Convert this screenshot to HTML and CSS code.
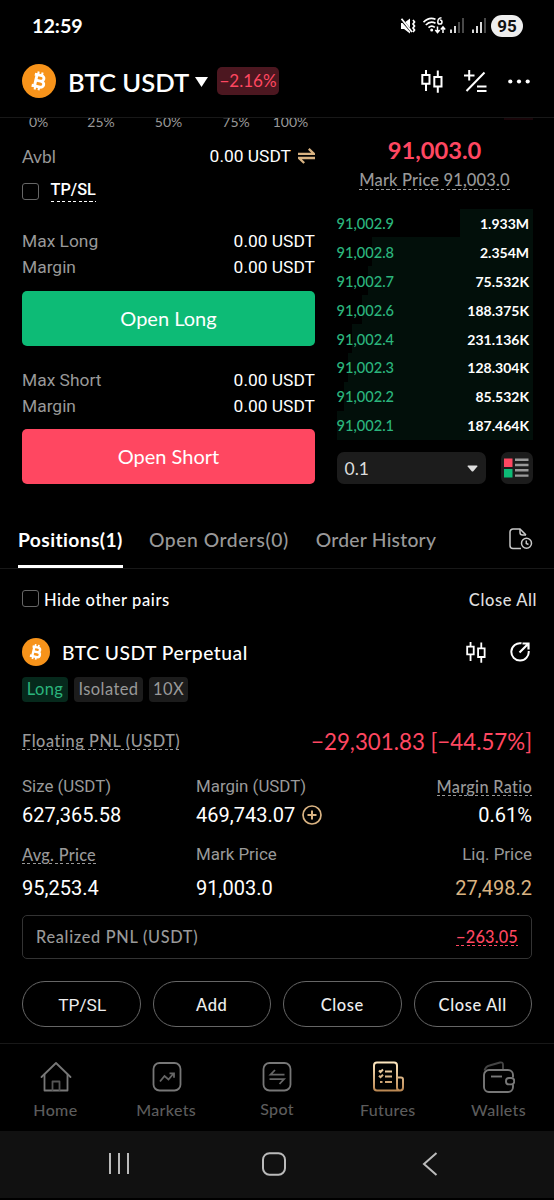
FILE: index.html
```html
<!DOCTYPE html>
<html lang="en">
<head>
<meta charset="utf-8">
<title>BTC USDT Futures</title>
<link rel="stylesheet" href="styles.css">
</head>
<body>
<svg class="defs" width="0" height="0" aria-hidden="true">
  <symbol id="btc" viewBox="0 0 34 34">
    <circle cx="17" cy="17" r="17" fill="#f7931a"/>
    <g fill="none" stroke="#fff" stroke-width="2.9" stroke-linejoin="round" transform="rotate(13 17 17)">
      <path d="M11.400 11.200H18.500a2.800 2.800 0 0 1 0 5.600H13.700M18.500 16.800h.9a3 3 0 0 1 0 6H10.800"/>
      <path d="M13.700 11.200v11.600"/>
      <path stroke-width="2.1" d="M14.600 7.800v3.200M18.600 7.800v3.200M14.600 22.800V26.200M18.600 22.800V26.200"/>
    </g>
  </symbol>
  <symbol id="candles" viewBox="0 0 22 24">
    <path d="M5 1v5M5 14.500v7.500M1.300 6h7.200v8.700H1.300zM16.800 1.500v6.500M16.800 17.500v6.300M13.300 8h7.200v9.500h-7.200z" fill="none" stroke="#fff" stroke-width="2"/>
  </symbol>
</svg>

<header class="status">
  <span class="clock">12:59</span>
  <div class="status-icons">
    <svg class="mute" width="17" height="16" viewBox="0 0 17 16"><path d="M1 5h3l6-4.500v15L4 11H1z" fill="#fff"/><path d="M.5.500 12 14" stroke="#000" stroke-width="2.6"/><path d="M1.500.800 12 14" stroke="#fff" stroke-width="1.800"/><path d="m13 2 1.500 2L13 6l1.500 2L13 10l1.500 2L13 14" fill="none" stroke="#fff" stroke-width="1.700"/></svg>
    <svg class="wifi" width="23" height="17" viewBox="0 0 23 17"><g fill="none" stroke="#fff" stroke-width="1.700"><path d="M.5 5.200Q6-.5 12.500 2.200M2.800 8q4.500-4.500 9.700-1.700M5.500 10.700q3.200-3 6.300-.3"/><path d="M18.500.8C16 1 14.800 2.800 14.800 5a2.100 2.100 0 1 0 2.100-2.100" stroke-width="1.500"/><path d="M14.500 9.500v6M12.300 13l2.200 2.500 2.200-2.500M20 16v-6M17.800 12.500 20 10l2.200 2.500" stroke-width="1.500"/></g><circle cx="8.700" cy="13" r="1.500" fill="#fff"/></svg>
    <svg class="signal" width="14" height="15" viewBox="0 0 14 15"><path d="M1 11.500V15M5 8v7" stroke="#fff" stroke-width="1.700"/><path d="M9 4v11M13 0v15" stroke="#555" stroke-width="1.700"/></svg>
    <svg class="signal second" width="14" height="15" viewBox="0 0 14 15"><path d="M1 11.500V15M5 8v7M9 4v11" stroke="#fff" stroke-width="1.700"/><path d="M13 0v15" stroke="#555" stroke-width="1.700"/></svg>
    <span class="battery">95</span>
  </div>
</header>

<section class="pair-bar">
  <svg width="34" height="34"><use href="#btc"/></svg>
  <h1 class="pair-name">BTC USDT</h1>
  <svg class="caret" width="13" height="10" viewBox="0 0 13 10"><path d="M0 0h13L6.500 10z" fill="#fff"/></svg>
  <span class="change">−2.16%</span>
  <div class="pair-tools">
    <svg width="22" height="24"><use href="#candles"/></svg>
    <svg width="23" height="23" viewBox="0 0 23 23"><path d="M0 5.500h10.500M5.200 0v10.500M2.500 21 20.500 2.500M13 16.500h9.500M13 21h9.500" fill="none" stroke="#fff" stroke-width="2"/></svg>
    <svg width="22" height="5" viewBox="0 0 22 5"><circle cx="2.300" cy="2.500" r="2.1" fill="#fff"/><circle cx="11" cy="2.500" r="2.1" fill="#fff"/><circle cx="19.700" cy="2.500" r="2.1" fill="#fff"/></svg>
  </div>
</section>

<main>
  <section class="trade">
    <div class="order-form">
      <div class="percents"><span class="p0">0%</span><span class="p25">25%</span><span class="p50">50%</span><span class="p75">75%</span><span class="p100">100%</span></div>
      <div class="line avbl"><span class="label px">Avbl</span><span class="val">0.00 USDT</span>
        <svg width="17" height="16" viewBox="0 0 17 16"><path d="M0 5.800h16L10.800.900M17 10H1l5.200 5" fill="none" stroke="#d9b382" stroke-width="2.3"/></svg>
      </div>
      <div class="tpsl"><span class="box"></span><span class="dashed tpsl-text">TP/SL</span></div>
      <div class="line max"><span class="label">Max Long</span><span class="val">0.00 USDT</span></div>
      <div class="line"><span class="label">Margin</span><span class="val">0.00 USDT</span></div>
      <button class="open long">Open Long</button>
      <div class="line max2"><span class="label">Max Short</span><span class="val">0.00 USDT</span></div>
      <div class="line"><span class="label">Margin</span><span class="val">0.00 USDT</span></div>
      <button class="open short">Open Short</button>
    </div>
    <div class="book">
      <div class="ask-edge"></div>
      <div class="last">91,003.0</div>
      <div class="mark"><span class="dashed">Mark Price 91,003.0</span></div>
      <div class="depth">
        <div class="bid"><i class="fill" style="width:73px"></i><b>91,002.9</b><em>1.933M</em></div>
        <div class="bid"><i class="fill" style="width:161px"></i><b>91,002.8</b><em>2.354M</em></div>
        <div class="bid"><i class="fill" style="width:165px"></i><b>91,002.7</b><em>75.532K</em></div>
        <div class="bid"><i class="fill" style="width:171px"></i><b>91,002.6</b><em>188.375K</em></div>
        <div class="bid"><i class="fill" style="width:181px"></i><b>91,002.4</b><em>231.136K</em></div>
        <div class="bid"><i class="fill" style="width:185px"></i><b>91,002.3</b><em>128.304K</em></div>
        <div class="bid"><i class="fill" style="width:189px"></i><b>91,002.2</b><em>85.532K</em></div>
        <div class="bid"><i class="fill" style="width:196px"></i><b>91,002.1</b><em>187.464K</em></div>
      </div>
      <div class="book-tools">
        <div class="step"><span>0.1</span><svg width="11" height="7" viewBox="0 0 11 7"><path d="M1 .5h9q.8.300.300 1L6.500 6q-1 1-2 0L.7 1.500Q.2.800 1 .5z" fill="#ddd"/></svg></div>
        <div class="view"><svg width="25" height="20" viewBox="0 0 25 20"><path d="M0 .5h8.500V9H0z" fill="#ff4761"/><path d="M0 11h8.500v8.500H0z" fill="#0dbb76"/><path d="M11 1.800h13.500M11 7h13.500M11 12.300h13.500M11 17.600h13.500" stroke="#999" stroke-width="2.400"/></svg></div>
      </div>
    </div>
  </section>

  <nav class="tabs">
    <span class="tab active">Positions(1)</span>
    <span class="tab t2">Open Orders(0)</span>
    <span class="tab t3">Order History</span>
    <svg width="24" height="22" viewBox="0 0 24 22"><g fill="none" stroke="#c8c8c8" stroke-width="1.500"><path d="M12 20.500H4A3 3 0 0 1 1 17.500V4A3 3 0 0 1 4 1h7l6 6"/><path d="M11 1v3.500A2.500 2.500 0 0 0 13.500 7H17"/><circle cx="17.500" cy="15.300" r="5"/><path d="M17.300 12.500v3l2.200 1"/></g></svg>
  </nav>

  <div class="filter"><span class="box"></span><span class="hide">Hide other pairs</span><span class="close-link">Close All</span></div>

  <article class="position">
    <div class="pos-head">
      <svg width="28" height="28"><use href="#btc"/></svg>
      <h2>BTC USDT Perpetual</h2>
      <svg class="pos-candles" width="20" height="22"><use href="#candles"/></svg>
      <svg width="20" height="20" viewBox="0 0 20 20"><path d="M11.500 1.300A8.700 8.700 0 1 0 18.700 9" fill="none" stroke="#fff" stroke-width="2"/><path d="M9.500 10.500 18 2M12.500 1.500h6v6" fill="none" stroke="#fff" stroke-width="2.200"/></svg>
    </div>
    <div class="tags"><span class="tag side">Long</span><span class="tag iso">Isolated</span><span class="tag lev">10X</span></div>
    <div class="pnl"><span class="dashed pnl-label">Floating PNL (USDT)</span><span class="pnl-val">−29,301.83 [−44.57%]</span></div>
    <div class="stats">
      <div class="stat"><span class="k">Size (USDT)</span><span class="v">627,365.58</span></div>
      <div class="stat"><span class="k">Margin (USDT)</span><span class="v">469,743.07<svg width="20" height="20" viewBox="0 0 20 20"><circle cx="10" cy="10" r="9" fill="none" stroke="#d9b382" stroke-width="1.700"/><path d="M5.500 10h9M10 5.500v9" stroke="#d9b382" stroke-width="2"/></svg></span></div>
      <div class="stat end"><span class="k px"><span class="dashed ratio">Margin Ratio</span></span><span class="v">0.61%</span></div>
    </div>
    <div class="stats second-row">
      <div class="stat"><span class="k px"><span class="dashed avg">Avg. Price</span></span><span class="v">95,253.4</span></div>
      <div class="stat"><span class="k">Mark Price</span><span class="v">91,003.0</span></div>
      <div class="stat end"><span class="k">Liq. Price</span><span class="v gold">27,498.2</span></div>
    </div>
    <div class="realized"><span class="r-label">Realized PNL (USDT)</span><span class="dashed r-val">−263.05</span></div>
    <div class="actions"><button class="rb">TP/SL</button><button>Add</button><button>Close</button><button>Close All</button></div>
  </article>
</main>

<nav class="bottom">
  <div class="item"><svg width="32" height="30" viewBox="0 0 32 30"><g fill="none" stroke="#777" stroke-width="1.800" stroke-linejoin="round" stroke-linecap="round"><path d="M1.500 15 16 1l14.500 14"/><path d="M4.500 12.500V28.500h23V12.500"/><path d="M12.500 28v-8.500h7V28" stroke="#555"/></g></svg><span>Home</span></div>
  <div class="item"><svg width="30" height="30" viewBox="0 0 30 30"><rect x="1.500" y="1" width="27" height="27.500" rx="6" fill="none" stroke="#777" stroke-width="1.800"/><path d="m8 19.500 4.500-5.500 4 3.500 5-6M17.500 11.300h4.500v4.500" fill="none" stroke="#666" stroke-width="1.800"/></svg><span>Markets</span></div>
  <div class="item spot"><svg width="30" height="30" viewBox="0 0 30 30"><rect x="1.500" y="1" width="27" height="27.500" rx="6" fill="none" stroke="#777" stroke-width="1.800"/><path d="M22.500 12.700H8.500L13 8M7.500 17.200h14.500L17.500 22" fill="none" stroke="#666" stroke-width="1.800"/></svg><span>Spot</span></div>
  <div class="item"><svg width="31" height="31" viewBox="0 0 31 31"><defs><linearGradient id="gold" gradientUnits="userSpaceOnUse" x1="0" y1="0" x2="0" y2="30"><stop offset="0" stop-color="#ffe9c2"/><stop offset="1" stop-color="#b98550"/></linearGradient></defs><g fill="none" stroke="url(#gold)" stroke-width="2"><path d="M24 24.500V4a3 3 0 0 0-3-3H4a3 3 0 0 0-3 3v22a3 3 0 0 0 3 3h23a3 3 0 0 0 3-3V18a2 2 0 0 0-2-2h-4M24 24v2a3 3 0 0 0 3 3"/><path d="M12 10h7M12 15h7M12 20.500h7M6 9l1.500 1.500L10 8M6 14.200l1.500 1.500 2.500-2.500M7 20.500h2.500"/></g></svg><span>Futures</span></div>
  <div class="item"><svg width="32" height="32" viewBox="0 0 32 32"><g fill="none" stroke="#777" stroke-width="1.900"><path d="M30 16.500V14a5 5 0 0 0-5-5H6a5 5 0 0 0-5 5v12a5 5 0 0 0 5 5h19a5 5 0 0 0 5-5v-2.500"/><rect x="23" y="17" width="8.200" height="6.400" rx="3"/><path d="M8 15.500h11"/><path d="M1.500 9.500Q2.500 5.500 6.500 4.500L17 1.500q3-.8 3 2.500v4" stroke="#444"/></g></svg><span>Wallets</span></div>
</nav>

<footer class="system">
  <svg width="22" height="23" viewBox="0 0 22 23"><path d="M2 1v21M11 1v21M20 1v21" stroke="#bbb" stroke-width="2"/></svg>
  <svg class="home-key" width="24" height="24" viewBox="0 0 24 24"><rect x="1" y="1.200" width="22" height="21.500" rx="6.500" fill="none" stroke="#bbb" stroke-width="2"/></svg>
  <svg width="16" height="24" viewBox="0 0 16 24"><path d="M14.500 1 2 12l12.500 11" fill="none" stroke="#bbb" stroke-width="2"/></svg>
</footer>
</body>
</html>
```
FILE: styles.css
```css
* { box-sizing: border-box; margin: 0; padding: 0; }
body { width: 554px; height: 1200px; overflow: hidden; background: #000; color: #fff; font-family: Lato, "Noto Sans", sans-serif; font-size: 17px; white-space: nowrap; font-variant-ligatures: none; }
svg { display: block; flex: none; }
.defs { position: absolute; }
button { font: inherit; color: inherit; border: 0; background: none; }
h1, h2 { font-weight: 600; }
i, em, b { font-style: normal; font-weight: 600; }

.status { height: 51px; padding: 0 31px 0 32px; display: flex; align-items: center; justify-content: space-between; }
.clock { font-size: 19.700px; font-weight: 700; padding-bottom: 1px; }
.status-icons { display: flex; align-items: center; }
.wifi { margin-left: 6px; }
.signal { margin-left: 4px; }
.signal.second { margin-left: 8px; }
.battery { margin-left: 5px; width: 32px; height: 22px; border-radius: 11px; background: #eee; color: #111; font: 700 17px/22px Roboto, sans-serif; text-align: center; }

.pair-bar { height: 67px; padding: 0 24px 6px 22px; display: flex; align-items: center; border-bottom: 1px solid #181818; }
.pair-name { margin-left: 12px; font-size: 25.600px; width: 121px; padding-top: 1px; }
.caret { margin-left: 6px; margin-top: 2px; }
.change { margin-left: 9px; width: 62px; height: 28px; border-radius: 5px; background: #4c1720; color: #ff4761; line-height: 28px; text-align: center; font-size: 17px; }
.pair-tools { margin-left: auto; display: flex; align-items: center; gap: 21px; }

.trade { display: flex; height: 392px; padding-left: 22px; gap: 21.500px; }
.order-form { width: 293px; display: flex; flex-direction: column; }
.percents { height: 10px; overflow: hidden; color: #999; font-size: 14px; line-height: 7px; display: flex; padding-left: 7px; }
.p25 { margin-left: 39px; }
.p50 { margin-left: 40px; }
.p75 { margin-left: 40px; }
.p100 { margin-left: 23px; }
.line { height: 26.500px; display: flex; align-items: center; font-family: Roboto, sans-serif; font-size: 17.400px; }
.label { color: #999; margin-right: auto; }
.px { font-family: Lato, sans-serif; }
.avbl { margin-top: 15px; }
.avbl svg { margin-left: 7px; }
.tpsl { display: flex; height: 36px; align-items: center; padding-top: 8px; }
.box { width: 17px; height: 17px; border: 1.500px solid #666; border-radius: 3px; flex: none; }
.dashed { background: repeating-linear-gradient(90deg, currentColor 0 3px, transparent 3px 5.500px) left bottom / 100% 1px no-repeat; }
.tpsl-text { margin-left: 11.500px; height: 23px; line-height: 21px; margin-top: -2px; font-family: Roboto, sans-serif; font-size: 16.300px; font-weight: 500; }
.max { margin-top: 22px; }
.max2 { margin-top: 21px; }
.open { height: 55px; border-radius: 5px; font-size: 20px; flex: none; }
.long { margin-top: 10px; background: #0dbb76; }
.short { margin-top: 9px; background: #ff4761; }

.book { width: 196px; display: flex; flex-direction: column; }
.ask-edge { height: 2px; width: 29px; align-self: flex-end; background: #180509; }
.last { height: 40px; margin-top: 10px; text-align: center; font-size: 23.700px; font-weight: 700; line-height: 41px; color: #ff4761; }
.mark { height: 20px; text-align: center; line-height: 20px; font-size: 16.500px; letter-spacing: .150px; font-weight: 500; color: #999; }
.mark span { display: inline-block; height: 20px; }
.depth { margin-top: 18.500px; }
.bid { position: relative; height: 28.900px; padding: 1px 3.500px 0 0; display: flex; justify-content: space-between; align-items: center; font-size: 14px; }
.fill { position: absolute; right: 0; top: 0; bottom: 0; background: #020f0a; }
.bid b { position: relative; color: #2bb57d; font-weight: 500; font-size: 14.600px; }
.bid em { position: relative; font-weight: 700; }
.book-tools { display: flex; justify-content: space-between; margin-top: 12.500px; }
.step { width: 149px; height: 32px; border-radius: 7px; background: #1c1c1c; display: flex; align-items: center; justify-content: space-between; padding: 0 8px; color: #ddd; font-size: 17.500px; }
.view { width: 32px; height: 32px; border-radius: 7px; background: #1c1c1c; display: flex; align-items: center; justify-content: center; }

.tabs { height: 59px; padding: 0 21px 0 18px; border-bottom: 1px solid #181818; display: flex; align-items: center; }
.tab { height: 58px; line-height: 59px; font-size: 19.300px; letter-spacing: .550px; font-weight: 500; color: #999; }
.tab.active { width: 105px; color: #fff; font-weight: 700; border-bottom: 3px solid #fff; letter-spacing: .370px; }
.t2 { margin-left: 26px; }
.t3 { margin-left: 27px; letter-spacing: .250px; }
.tabs svg { margin-left: auto; }

.filter { height: 61px; padding: 0 17px 0 22px; display: flex; align-items: center; font-size: 16.500px; letter-spacing: .580px; font-weight: 500; }
.filter .box { margin-bottom: 3px; }
.hide { margin-left: 5px; }
.close-link { margin-left: auto; color: #ddd; }

.position { padding: 0 22px; height: 413px; }
.pos-head { height: 44px; display: flex; align-items: center; }
.pos-head h2 { margin-left: 12px; font-size: 19.300px; font-weight: 500; letter-spacing: .500px; }
.pos-candles { margin-left: auto; margin-right: 24px; }
.pos-head svg:last-child { margin-right: 2px; }
.tags { display: flex; gap: 6px; margin-top: 3px; }
.tag { height: 25px; line-height: 25px; border-radius: 4px; text-align: center; background: #1c1c1c; color: #999; font-size: 16.500px; letter-spacing: .400px; }
.side { width: 46px; background: #06291c; color: #2bb57d; }
.iso { width: 69px; }
.lev { width: 39px; }
.pnl { height: 48px; margin-top: 15px; display: flex; align-items: center; justify-content: space-between; }
.pnl-label { color: #999; font-size: 16.300px; font-weight: 500; letter-spacing: .580px; margin-top: -2px; }
.pnl-val { color: #ff4761; font-size: 22.300px; padding-top: 1px; }
.stats { display: grid; grid-template-columns: 174px 1fr 120px; font-family: Roboto, sans-serif; margin-top: 7px; }
.stat { display: flex; flex-direction: column; }
.end { align-items: flex-end; }
.k { height: 28px; display: flex; align-items: center; color: #999; font-size: 16.900px; }
.k.px { font-size: 16.300px; letter-spacing: .300px; font-weight: 500; }
.v { height: 29px; display: flex; align-items: center; font-size: 20px; }
.v svg { margin-left: 7px; }
.second-row .v { height: 39px; }
.second-row { margin-top: 11px; }
.gold { color: #d9b382; }
.realized { height: 44px; margin-top: 8px; border: 1px solid #333; border-radius: 5px; padding: 0 13px 1px; display: flex; align-items: center; justify-content: space-between; color: #999; font-size: 16.300px; font-weight: 500; }
.r-label { letter-spacing: .700px; }
.r-val { color: #ff4761; letter-spacing: .200px; margin-top: -1px; }
.actions { margin-top: 22px; display: grid; grid-template-columns: repeat(4, 1fr); gap: 12px; }
.actions button { height: 46px; padding-top: 1px; border: 1.500px solid #666; border-radius: 23px; color: #eee; font-size: 16.500px; font-weight: 500; letter-spacing: .600px; }
.actions .rb { font-family: Roboto, sans-serif; font-weight: 400; font-size: 17.300px; letter-spacing: 0; padding-left: 2px; }

.bottom { height: 88px; border-top: 1px solid #181818; display: grid; grid-template-columns: repeat(5, 1fr); color: #5c5c5c; font-size: 16px; letter-spacing: .350px; font-weight: 500; }
.item { display: flex; flex-direction: column; align-items: center; padding-top: 17px; }
.item svg { height: 32px; margin-left: 1px; }
.item span { margin-top: 7px; }
.spot span { margin-top: 6px; }
.system { height: 67px; background: #111; display: flex; justify-content: space-between; align-items: center; padding: 0 116px 2px 108px; }
.home-key { margin-right: 5px; }
```
